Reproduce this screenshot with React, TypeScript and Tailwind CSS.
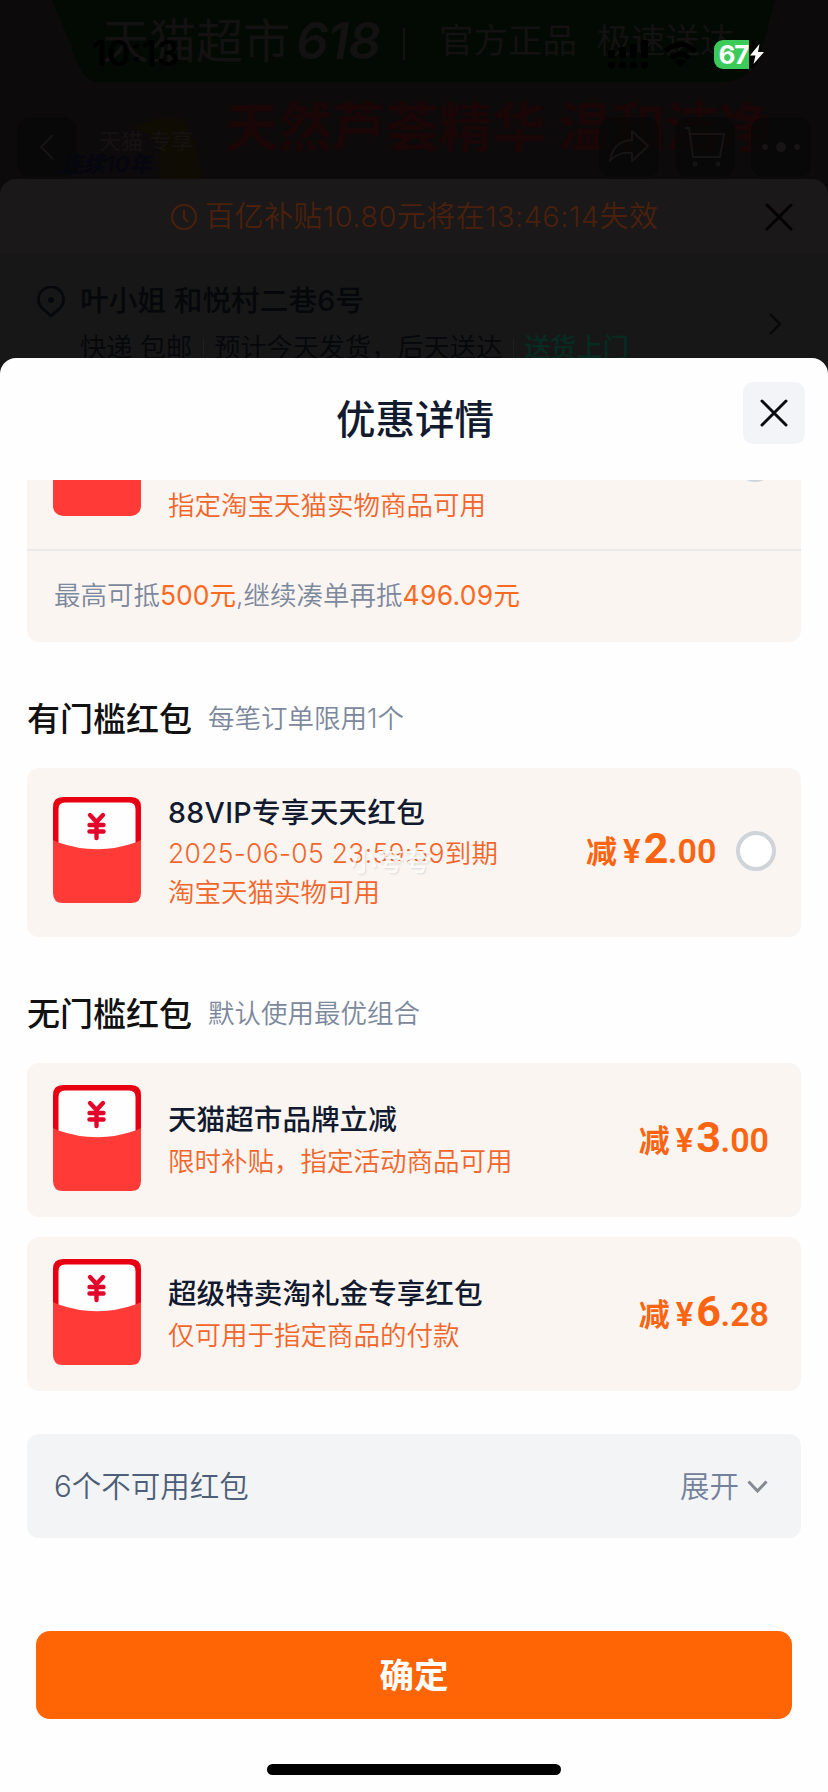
import type { ReactNode } from 'react';

const FONT = "font-[Inter,'Noto_Sans_CJK_SC',sans-serif]";

/* ── Red envelope ── */
const Envelope = ({ className = '' }: { className?: string }) => (
  <svg viewBox="0 0 88 106" className={`h-[106px] w-[88px] shrink-0 ${className}`}>
    <path d="M10 0H78Q88 0 88 10V60H0V10Q0 0 10 0Z" fill="#e60012" />
    <path d="M12 5.500H76Q82.500 5.500 82.500 12V60H5.500V12Q5.500 5.500 12 5.500Z" fill="#fffefe" />
    <path d="M0 43L5.500 45.500Q44 59 82.500 45.500L88 43V96Q88 106 78 106H10Q0 106 0 96Z" fill="#ff3a37" />
    <g stroke="#e3062c" strokeWidth="4.400" strokeLinecap="round" fill="none">
      <path d="M37 18L43.500 25L50 18" />
      <path d="M43.500 25V41" />
      <path d="M36.500 28H50.500" />
      <path d="M36.500 34.500H50.500" />
    </g>
  </svg>
);

const CloseIcon = ({ className }: { className: string }) => (
  <svg viewBox="0 0 28 28" className={className} fill="none" stroke="currentColor" strokeWidth="3" strokeLinecap="round">
    <path d="M2 2L26 26M26 2L2 26" />
  </svg>
);

/* ── 减 ¥x.xx ── */
const Price = ({ whole, cents }: { whole: string; cents: string }) => (
  <div className="flex items-baseline pb-0.5 leading-[44px] text-[#fb6410]">
    <span className="text-[31px] font-bold">减</span>
    <span className="ml-1.5 font-[Roboto,sans-serif] text-[33px] font-semibold">¥</span>
    <span className="ml-[3px] font-[Roboto,sans-serif] text-[43px] font-bold tracking-[-0.500px]">{whole}</span>
    <span className="font-[Roboto,sans-serif] text-[34px] font-semibold">.{cents}</span>
  </div>
);

const SectionTitle = ({ title, hint, className }: { title: string; hint: string; className: string }) => (
  <div className={`flex h-10 items-center gap-4 ${className}`}>
    <h2 className="text-[33px] font-medium leading-10 text-[#111]">{title}</h2>
    <span className="pb-0.5 text-[26.500px] font-[350] leading-10 text-[#7c889c]">{hint}</span>
  </div>
);

const DarkButton = ({ children }: { children: ReactNode }) => (
  <div className="flex size-[60px] items-center justify-center rounded-[14px] bg-[#080707]/80 text-[#171415]">{children}</div>
);

/* ── Status bar ── */
const StatusBar = () => (
  <div className="absolute inset-x-0 top-[38px] flex h-8 items-center pl-[92px]">
    <span className="w-[516px] text-[35.500px] font-semibold leading-8 text-black">10:13</span>
    <svg viewBox="0 0 42 30" className="h-[30px] w-[42px]" fill="#000">
      <rect x="0" y="11" width="7" height="8" rx="2" />
      <rect x="11" y="8" width="7" height="11" rx="2" />
      <rect x="22" y="5" width="7" height="14" rx="2" />
      <rect x="33" y="1" width="7" height="18" rx="2" />
      <circle cx="3.500" cy="26" r="3.500" />
      <circle cx="14.500" cy="26" r="3.500" />
      <circle cx="25.500" cy="26" r="3.500" />
      <circle cx="36.500" cy="26" r="3.500" />
    </svg>
    <svg viewBox="0 0 34 25" className="ml-[13px] h-[25px] w-[35px]" fill="none" stroke="#000" strokeWidth="5">
      <path d="M2 9Q17 -4 32 9" />
      <path d="M8 16Q17 8 26 16" />
      <path d="M17 25L11.500 19.500Q17 15.500 22.500 19.500Z" fill="#000" stroke="none" />
    </svg>
    <div className="ml-4 flex h-[29px] w-[44px] overflow-hidden rounded-[9px] bg-black/60">
      <div className="flex w-[35px] items-center justify-center bg-[#3ccb5a] pl-1 text-[26px] font-bold leading-[29px] tracking-[-1px] text-white">67</div>
    </div>
    <svg viewBox="0 0 14 20" className="-ml-[8px] h-5 w-[14px]" fill="#fff">
      <path d="M9.500 0L0 11.500H5.500L3.500 20L14 8H8Z" />
    </svg>
  </div>
);

/* ── Dimmed product page behind the sheet ── */
const Backdrop = () => (
  <div className="absolute inset-x-0 top-0 h-[400px] overflow-hidden bg-[#0d0a0b]">
    <div className="relative h-[179px]">
      <svg viewBox="0 0 828 179" className="absolute inset-0 h-[179px] w-[828px]">
        <path d="M52 0H775C766 24 764 82 724 82H98C78 82 76 50 52 0Z" fill="#030a03" />
        <path d="M134 128Q160 112 184 120Q200 150 202 179H160V140Z" fill="#0f0c04" />
        <path d="M404 28V60" stroke="#131112" strokeWidth="2" />
      </svg>
      <div className="relative flex h-[82px] items-center whitespace-nowrap pl-[102px] text-[#131112]">
        <span className="text-[47px] leading-[82px]">天猫超市</span>
        <span className="ml-1.5 w-[143px] text-[51px] font-semibold italic leading-[82px] tracking-[-1px]">618</span>
        <span className="text-[34.500px] leading-[86px]">官方正品&nbsp; 极速送达</span>
      </div>
      <div className="relative h-[94px] whitespace-nowrap pl-[225px] text-[53.500px] font-bold leading-[92px] text-[#1a0507]">天然芦荟精华 温和洁净</div>
      <div className="absolute inset-x-0 top-[117px] flex pl-[17px]">
        <DarkButton>
          <svg viewBox="0 0 16 28" className="h-7 w-4" fill="none" stroke="currentColor" strokeWidth="2">
            <path d="M14 2L2 14L14 26" />
          </svg>
        </DarkButton>
        <div className="-ml-4 w-[538px] whitespace-nowrap pt-[13px]">
          <div className="pl-[38px] text-[22px] leading-[22px] text-[#151213]">天猫 专享</div>
          <div className="text-[22px] font-bold italic leading-6 text-[#05060f]">连续10年</div>
        </div>
        <div className="flex gap-4">
          <DarkButton>
            <svg viewBox="0 0 42 36" className="h-9 w-[42px]" fill="none" stroke="currentColor" strokeWidth="2" strokeLinejoin="round">
              <path d="M24 2L40 17L24 32V24Q10 22 2 32Q5 12 24 11Z" />
            </svg>
          </DarkButton>
          <DarkButton>
            <svg viewBox="0 0 42 42" className="size-[42px]" fill="none" stroke="currentColor" strokeWidth="2">
              <path d="M1 2H5L9 31H36L40 8H6" />
              <circle cx="11" cy="38" r="1.500" />
              <circle cx="34" cy="38" r="1.500" />
            </svg>
          </DarkButton>
          <DarkButton>
            <svg viewBox="0 0 40 12" className="h-3 w-10" fill="currentColor">
              <circle cx="4" cy="6" r="3" />
              <circle cx="20" cy="6" r="5" />
              <circle cx="36" cy="6" r="3" />
            </svg>
          </DarkButton>
        </div>
      </div>
    </div>
    <StatusBar />

    <div className="relative h-[221px] rounded-t-[16px] bg-[#171717]">
      <div className="flex h-[76px] items-center rounded-t-[16px] bg-[#1a1818] pl-[171px] text-[#4b200c]">
        <svg viewBox="0 0 26 26" className="size-[26px]" fill="none" stroke="currentColor" strokeWidth="2">
          <circle cx="13" cy="13" r="12" />
          <path d="M13 6V14L17 18" />
        </svg>
        <span className="ml-2 w-[560px] whitespace-nowrap text-[29px] font-[350] leading-10 tracking-[0.450px]">百亿补贴10.80元将在13:46:14失效</span>
        <CloseIcon className="size-7 text-[#030303]" />
      </div>
      <div className="flex pl-[37px] pt-[26px]">
        <svg viewBox="0 0 28 32" className="mt-[5px] h-8 w-7" fill="none" stroke="#07080b" strokeWidth="2.800">
          <path d="M14 30L5.500 22.500A12.500 12.500 0 1 1 22.500 22.500Z" strokeLinejoin="round" />
          <circle cx="14" cy="14" r="3" fill="#07080b" stroke="none" />
        </svg>
        <div className="ml-[15px] w-[688px] whitespace-nowrap text-[#06070a]">
          <div className="text-[28.700px] font-medium leading-10">叶小姐 和悦村二巷6号</div>
          <div className="mt-[7px] flex items-center text-[26.200px] font-[350] leading-10">
            快递 包邮
            <span className="ml-[11px] mr-[10px] h-5 w-px bg-[#231f20]" />
            预计今天发货，后天送达
            <span className="ml-[11px] mr-[10px] h-5 w-px bg-[#231f20]" />
            <span className="font-medium text-[#062c21]">送货上门</span>
          </div>
        </div>
        <svg viewBox="0 0 14 22" className="mt-8 h-[22px] w-[14px]" fill="none" stroke="#070707" strokeWidth="2">
          <path d="M2 1L12 11L2 21" />
        </svg>
      </div>
    </div>
  </div>
);

const SHORT_COUPONS = [
  { title: '天猫超市品牌立减', desc: '限时补贴，指定活动商品可用', whole: '3', cents: '00', gap: 'mt-[29px]' },
  { title: '超级特卖淘礼金专享红包', desc: '仅可用于指定商品的付款', whole: '6', cents: '28', gap: 'mt-5' },
];

export default function App() {
  return (
    <div className={`relative h-[1792px] w-[828px] overflow-hidden bg-[#0d0a0b] pt-[358px] ${FONT}`}>
      <Backdrop />

      <div className="relative flex h-[1434px] flex-col rounded-t-[16px] bg-[#fefefe]">
        <div className="flex h-[122px] shrink-0 items-start pl-[336px]">
          <h1 className="mt-[37px] w-[407px] text-[39.500px] font-medium leading-[50px] text-[#111a2f]">优惠详情</h1>
          <button className="mt-6 flex size-[62px] items-center justify-center rounded-[10px] bg-[#f3f4f8] text-[#0c0d12]">
            <CloseIcon className="size-7" />
          </button>
        </div>

        {/* Scrolled list */}
        <div className="flex flex-col px-[27px]">
          <div className="h-[162px] rounded-b-[12px] bg-[#fbf5f2]">
            <div className="flex h-[71px] items-start overflow-hidden border-b-2 border-[#ebe8ea] pl-[26px]">
              <div className="h-9 w-[88px] rounded-b-[10px] bg-[#ff3a37]" />
              <div className="ml-[27px] w-[567px] pt-[5px] text-[26.500px] font-[350] leading-10 text-[#f2662b]">指定淘宝天猫实物商品可用</div>
              <div className="-mt-[38px] size-10 rounded-full border-4 border-[#cfd4d9]" />
            </div>
            <div className="flex h-[88px] items-center pl-[27px] text-[26.500px] font-[350] leading-10 text-[#7c889c]">
              最高可抵<span className="font-normal text-[#fb6a22]">500元</span>,继续凑单再抵<span className="font-normal tracking-[0.300px] text-[#fb6a22]">496.09元</span>
            </div>
          </div>

          <SectionTitle className="mt-[57px]" title="有门槛红包" hint="每笔订单限用1个" />

          <div className="relative mt-[29px] flex h-[169px] rounded-[12px] bg-[#fbf5f2] pl-[26px]">
            <Envelope className="mt-[29px]" />
            <div className="ml-[27px] w-[418px] whitespace-nowrap pt-[25px]">
              <div className="text-[28.600px] font-medium leading-10 tracking-[0.300px] text-[#111a2f]">88VIP专享天天红包</div>
              <div className="text-[26.500px] font-[350] leading-10 tracking-[0.300px] text-[#f2662b]">2025-06-05 23:59:59到期</div>
              <div className="text-[26.500px] font-[350] leading-[38px] text-[#f2662b]">淘宝天猫实物可用</div>
            </div>
            <div className="flex w-[190px] items-center justify-between pb-1">
              <Price whole="2" cents="00" />
              <span className="size-10 shrink-0 rounded-full border-4 border-[#cfd4d9] bg-white" />
            </div>
            <span className="absolute left-[323px] top-[74px] text-[27px] font-medium leading-10 text-white/85 [text-shadow:1px_1px_2px_rgb(0_0_0/0.12)]">小夸夸</span>
          </div>

          <SectionTitle className="mt-[57px]" title="无门槛红包" hint="默认使用最优组合" />

          {SHORT_COUPONS.map((c) => (
            <div key={c.title} className={`flex h-[154px] rounded-[12px] bg-[#fbf5f2] pl-[26px] pr-8 ${c.gap}`}>
              <Envelope className="mt-[22px]" />
              <div className="ml-[27px] grow whitespace-nowrap pt-[37px]">
                <div className="text-[28.600px] font-medium leading-10 text-[#111a2f]">{c.title}</div>
                <div className="text-[26.500px] font-[350] leading-[42px] text-[#f2662b]">{c.desc}</div>
              </div>
              <div className="flex items-center">
                <Price whole={c.whole} cents={c.cents} />
              </div>
            </div>
          ))}

          <div className="mt-[43px] flex h-[104px] items-center justify-between rounded-[12px] bg-[#f3f4f6] pl-[27px] pr-[33px] text-[29.500px] font-[350] leading-10">
            <span className="text-[#4d5e78]">6个不可用红包</span>
            <span className="flex items-center gap-2 text-[#74819a]">
              展开
              <svg viewBox="0 0 21 13" className="h-[13px] w-[21px]" fill="none" stroke="#858a92" strokeWidth="3">
                <path d="M1.500 1.500L10.500 11L19.500 1.500" />
              </svg>
            </span>
          </div>
        </div>

        <button className="mx-9 mt-[93px] h-[88px] shrink-0 rounded-[14px] bg-[#ff6505] pt-0.5 text-[34.500px] font-bold leading-[86px] text-white">确定</button>
        <div className="mx-auto mt-[45px] h-[11px] w-[294px] shrink-0 rounded-full bg-black" />
      </div>
    </div>
  );
}
